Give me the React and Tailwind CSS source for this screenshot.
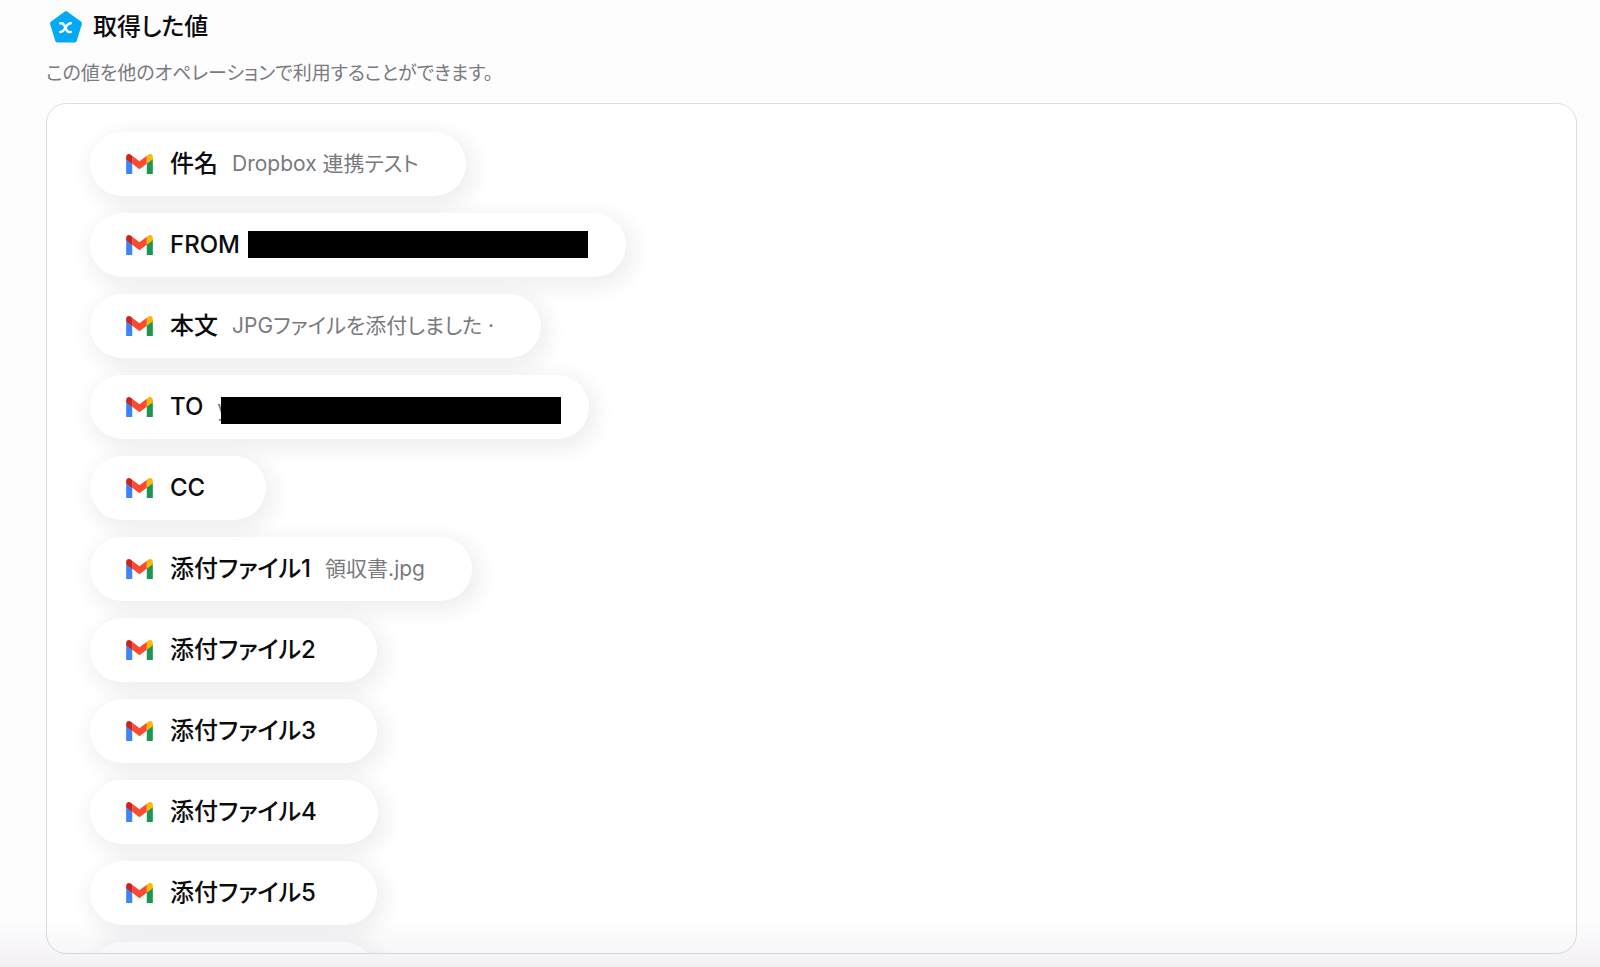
const items = [
  { label: "件名", value: "Dropbox 連携テスト" },
  { label: "FROM", value: "", bar: "-left-1.5" },
  { label: "本文", value: "JPGファイルを添付しました ·" },
  { label: "TO", value: "y", bar: "left-1 top-1" },
  { label: "CC" },
  { label: "添付ファイル1", value: "領収書.jpg" },
  { label: "添付ファイル2" },
  { label: "添付ファイル3" },
  { label: "添付ファイル4" },
  { label: "添付ファイル5" },
];

const pillClass =
  "flex h-16 shrink-0 items-center rounded-full bg-white pr-[47px] pl-9 shadow-[4px_6px_20px_4px_rgba(60,35,70,0.08)]";

function GmailIcon() {
  return (
    <svg viewBox="52 42 88 66" className="h-5 w-[27px] shrink-0" aria-hidden="true">
      <path fill="#3d84fb" d="M54 108h18V70L52 56v50c0 1.2.8 2 2 2" />
      <path fill="#1e9550" d="M120 108h18c1.2 0 2-.8 2-2V56l-20 14" />
      <path fill="#fbb904" d="M120 48v26l20-15v-8c0-7.42-8.47-11.65-14.4-7.2" />
      <path fill="#fc4a31" d="M72 74V48l24 18 24-18v26L96 92" />
      <path fill="#d0211b" d="M52 51v8l20 15V48l-5.6-4.2c-5.94-4.45-14.4-.22-14.4 7.2" />
    </svg>
  );
}

function VariableIcon() {
  return (
    <svg viewBox="0 0 34 34" className="size-[34px] shrink-0" aria-hidden="true">
      <path
        d="M17 3 31 13.3 25.8 30.5H8.2L3 13.3Z"
        fill="#03a9f4"
        stroke="#03a9f4"
        strokeWidth="4"
        strokeLinejoin="round"
      />
      <path
        d="M11.2 13.3c2.6-.4 3.600.6 4.400 2.600l1.800 3.800c.7 1.700 2 2.700 4.400 2.300M21.800 13.300c-1.600-.2-2.700.6-3.700 2l-3.200 4.600c-1 1.500-2 2.200-3.700 2.100"
        fill="none"
        stroke="#fff"
        strokeWidth="2.4"
        strokeLinecap="round"
      />
    </svg>
  );
}

function Pill({ label, value, bar }) {
  return (
    <li className={pillClass}>
      <GmailIcon />
      <span className="ml-[17px] text-2xl leading-8 font-medium text-[#0c0c0e]">{label}</span>
      <span
        className={`relative ml-3.5 text-[21px] leading-8 text-[#7a7a7e] ${bar ? "h-7 w-[325px]" : ""}`}
      >
        {value}
        {bar && <span className={`absolute h-[27px] w-[340px] bg-black ${bar}`} />}
      </span>
    </li>
  );
}

export default function App() {
  return (
    <main
      lang="ja"
      className="relative flex h-screen flex-col overflow-hidden bg-[#fefdfe] pr-[23px] pb-[13px] pl-[46px] font-['Inter','Noto_Sans_CJK_JP',sans-serif] [font-feature-settings:'palt']"
    >
      <header className="pt-2.5">
        <div className="flex items-center gap-2.5 pl-[3px]">
          <VariableIcon />
          <h1 className="text-2xl leading-8 font-medium text-[#0c0c0e]">取得した値</h1>
        </div>
        <p className="mt-4 text-[19px] leading-7 text-[#7a7a7e]">
          この値を他のオペレーションで利用することができます。
        </p>
      </header>
      <section className="mt-[15px] min-h-0 flex-1 overflow-hidden rounded-[20px] border border-[#dfdde2] bg-white">
        <ul className="flex flex-col items-start gap-[17px] px-[43px] pt-7">
          {items.map((item) => (
            <Pill key={item.label} {...item} />
          ))}
          <li className={`${pillClass} w-[286px]`} />
        </ul>
      </section>
      <div className="pointer-events-none absolute inset-x-0 bottom-0 h-12 bg-linear-to-b from-[#3c2850]/0 to-[#3c2850]/6" />
    </main>
  );
}
